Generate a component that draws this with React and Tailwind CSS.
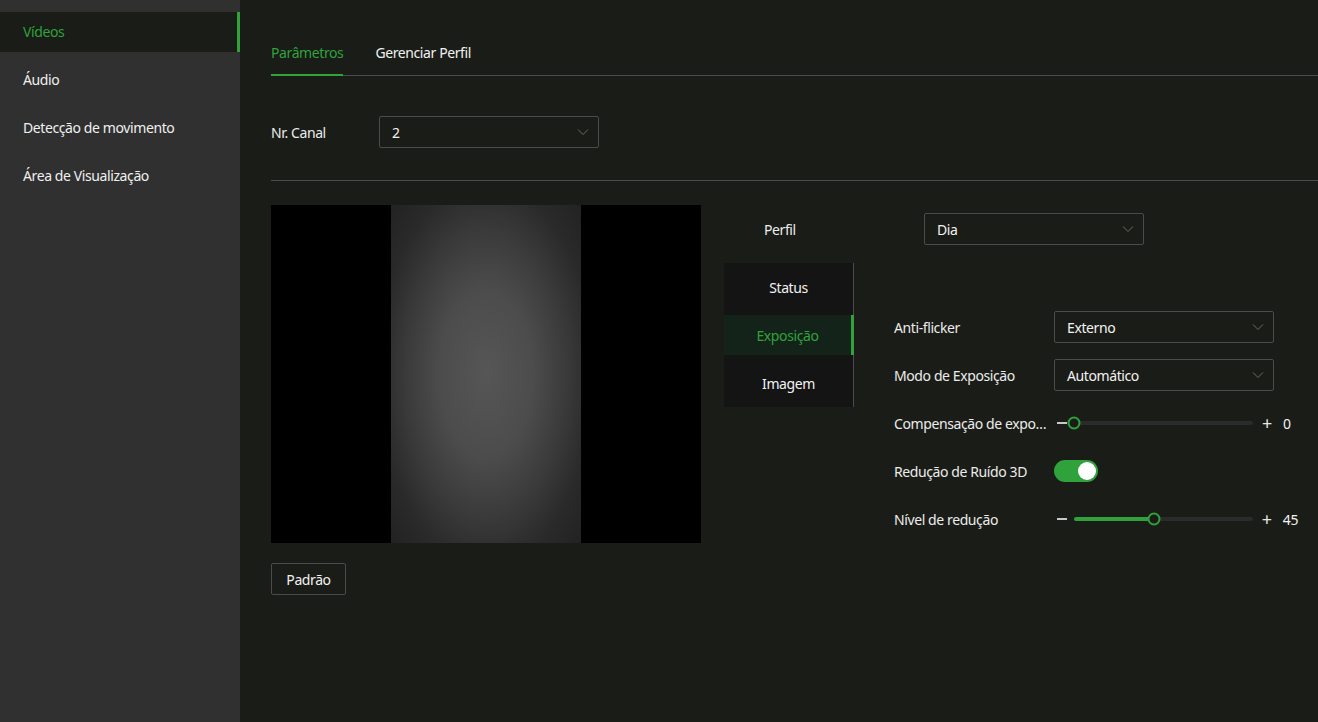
import React, { useState } from "react";

const font = { fontFamily: '"Noto Sans", "Open Sans", sans-serif' };

const menu = ["Vídeos", "Áudio", "Detecção de movimento", "Área de Visualização"];

const Chevron = () => (
  <svg width="12" height="8" viewBox="0 0 12 8" className="text-[#6b6b6b]">
    <path d="M1 1.5 L6 6.5 L11 1.5" fill="none" stroke="currentColor" strokeWidth="1" />
  </svg>
);

const Select = ({ value }) => (
  <div className="flex h-8 w-[220px] items-center justify-between rounded-[2px] border border-[#4b4b4e] pl-3 pr-[9px] text-[14px] text-[#f2f2f2]">
    <span>{value}</span>
    <Chevron />
  </div>
);

const Slider = ({ value }) => (
  <div className="flex h-8 w-[244px] items-center">
    <div className="flex w-5 items-center">
      <div className="ml-[3px] h-[2px] w-[10px] bg-[#c8c8c8]" />
    </div>
    <div className="relative h-1 w-[179px] rounded-full bg-[#2b2b2b]">
      <div className="absolute left-0 top-0 h-1 rounded-full bg-[#2fa23c]" style={{ width: `${value}%` }} />
      <div
        className="absolute top-1/2 h-[13px] w-[13px] -translate-x-1/2 -translate-y-1/2 rounded-full border-2 border-[#2fa23c] bg-[#1a1c17]"
        style={{ left: `${value}%` }}
      />
    </div>
    <span className="ml-[8px] w-[12px] text-center text-[18px] leading-none text-[#e6e6e6]">+</span>
    <span className="ml-[10px] text-[14px] text-[#f2f2f2]">{value}</span>
  </div>
);

const Row = ({ label, children }) => (
  <div className="flex h-8 items-center">
    <div className="w-[160px] truncate pr-[6px] text-[14px] text-[#ececec]">{label}</div>
    {children}
  </div>
);

export default function App() {
  const [tab, setTab] = useState(1);
  const [noise, setNoise] = useState(true);

  return (
    <div style={font} className="flex h-[722px] w-full overflow-hidden bg-[#1a1c17] tracking-[-0.4px]">
      {/* sidebar */}
      <aside className="flex w-[240px] shrink-0 flex-col gap-2 bg-[#2f302f] pt-3">
        {menu.map((m, i) => (
          <div
            key={m}
            className={
              i === 0
                ? "flex h-10 items-center border-r-[3px] border-[#2fa23c] bg-[#1a1c17] pb-px pl-[23px] text-[14px] text-[#2fa23c]"
                : "flex h-10 items-center pb-px pl-[23px] text-[14px] text-[#f0f0f0]"
            }
          >
            {m}
          </div>
        ))}
      </aside>

      {/* main */}
      <main className="flex-1 pl-[31px] pt-[42px]">
        <div className="flex gap-8 border-b border-[#4b4b4e]">
          <div className="-mb-px border-b-2 border-[#2fa23c] pb-[11px] text-[14px] text-[#2fa23c]">Parâmetros</div>
          <div className="pb-[12px] text-[14px] text-[#f2f2f2]">Gerenciar Perfil</div>
        </div>

        <div className="mt-10 flex h-8 items-center">
          <div className="w-[108px] text-[14px] text-[#ececec]">Nr. Canal</div>
          <Select value="2" />
        </div>

        <div className="mt-8 h-px bg-[#4b4b4e]" />

        <div className="mt-6 flex">
          <div className="flex flex-col">
            <div className="flex h-[338px] w-[430px] bg-black">
              <div className="ml-[120px] h-full w-[190px] bg-[radial-gradient(ellipse_at_center,#565656_0%,#4c4c4c_35%,#3a3a3a_60%,#2a2a2a_80%,#222_100%)]" />
            </div>
            <button className="mt-5 h-8 w-[75px] rounded-[2px] border border-[#4b4b4e] text-[14px] text-[#f2f2f2]">
              Padrão
            </button>
          </div>

          <div className="ml-[23px] flex flex-col pt-2">
            <div className="flex h-8 items-center">
              <div className="w-[200px] pl-10 text-[14px] text-[#ececec]">Perfil</div>
              <Select value="Dia" />
            </div>

            <div className="mt-[18px] flex">
              <div className="flex h-[144px] w-[130px] flex-col justify-center border-r border-[#4b4b4e] bg-[#141414]">
                {["Status", "Exposição", "Imagem"].map((t, i) => (
                  <div key={t} className="flex h-12 items-center">
                    <button
                      onClick={() => setTab(i)}
                      className={
                        tab === i
                          ? "-mr-px flex h-10 w-[130px] items-center justify-center border-r-[3px] border-[#2fa23c] bg-[#14231a] text-[14px] text-[#2fa23c]"
                          : "flex h-10 w-[129px] items-center justify-center text-[14px] text-[#f2f2f2]"
                      }
                    >
                      {t}
                    </button>
                  </div>
                ))}
              </div>

              <div className="ml-10 flex flex-col gap-4 pt-12">
                <Row label="Anti-flicker">
                  <Select value="Externo" />
                </Row>
                <Row label="Modo de Exposição">
                  <Select value="Automático" />
                </Row>
                <Row label="Compensação de exposição">
                  <Slider value={0} />
                </Row>
                <Row label="Redução de Ruído 3D">
                  <button
                    onClick={() => setNoise(!noise)}
                    className={
                      noise
                        ? "flex h-[22px] w-[44px] items-center justify-end rounded-full bg-[#2fa23c] px-[2px]"
                        : "flex h-[22px] w-[44px] items-center justify-start rounded-full bg-[#444] px-[2px]"
                    }
                  >
                    <span className="h-[18px] w-[18px] rounded-full bg-white" />
                  </button>
                </Row>
                <Row label="Nível de redução">
                  <Slider value={45} />
                </Row>
              </div>
            </div>
          </div>
        </div>
      </main>
    </div>
  );
}
